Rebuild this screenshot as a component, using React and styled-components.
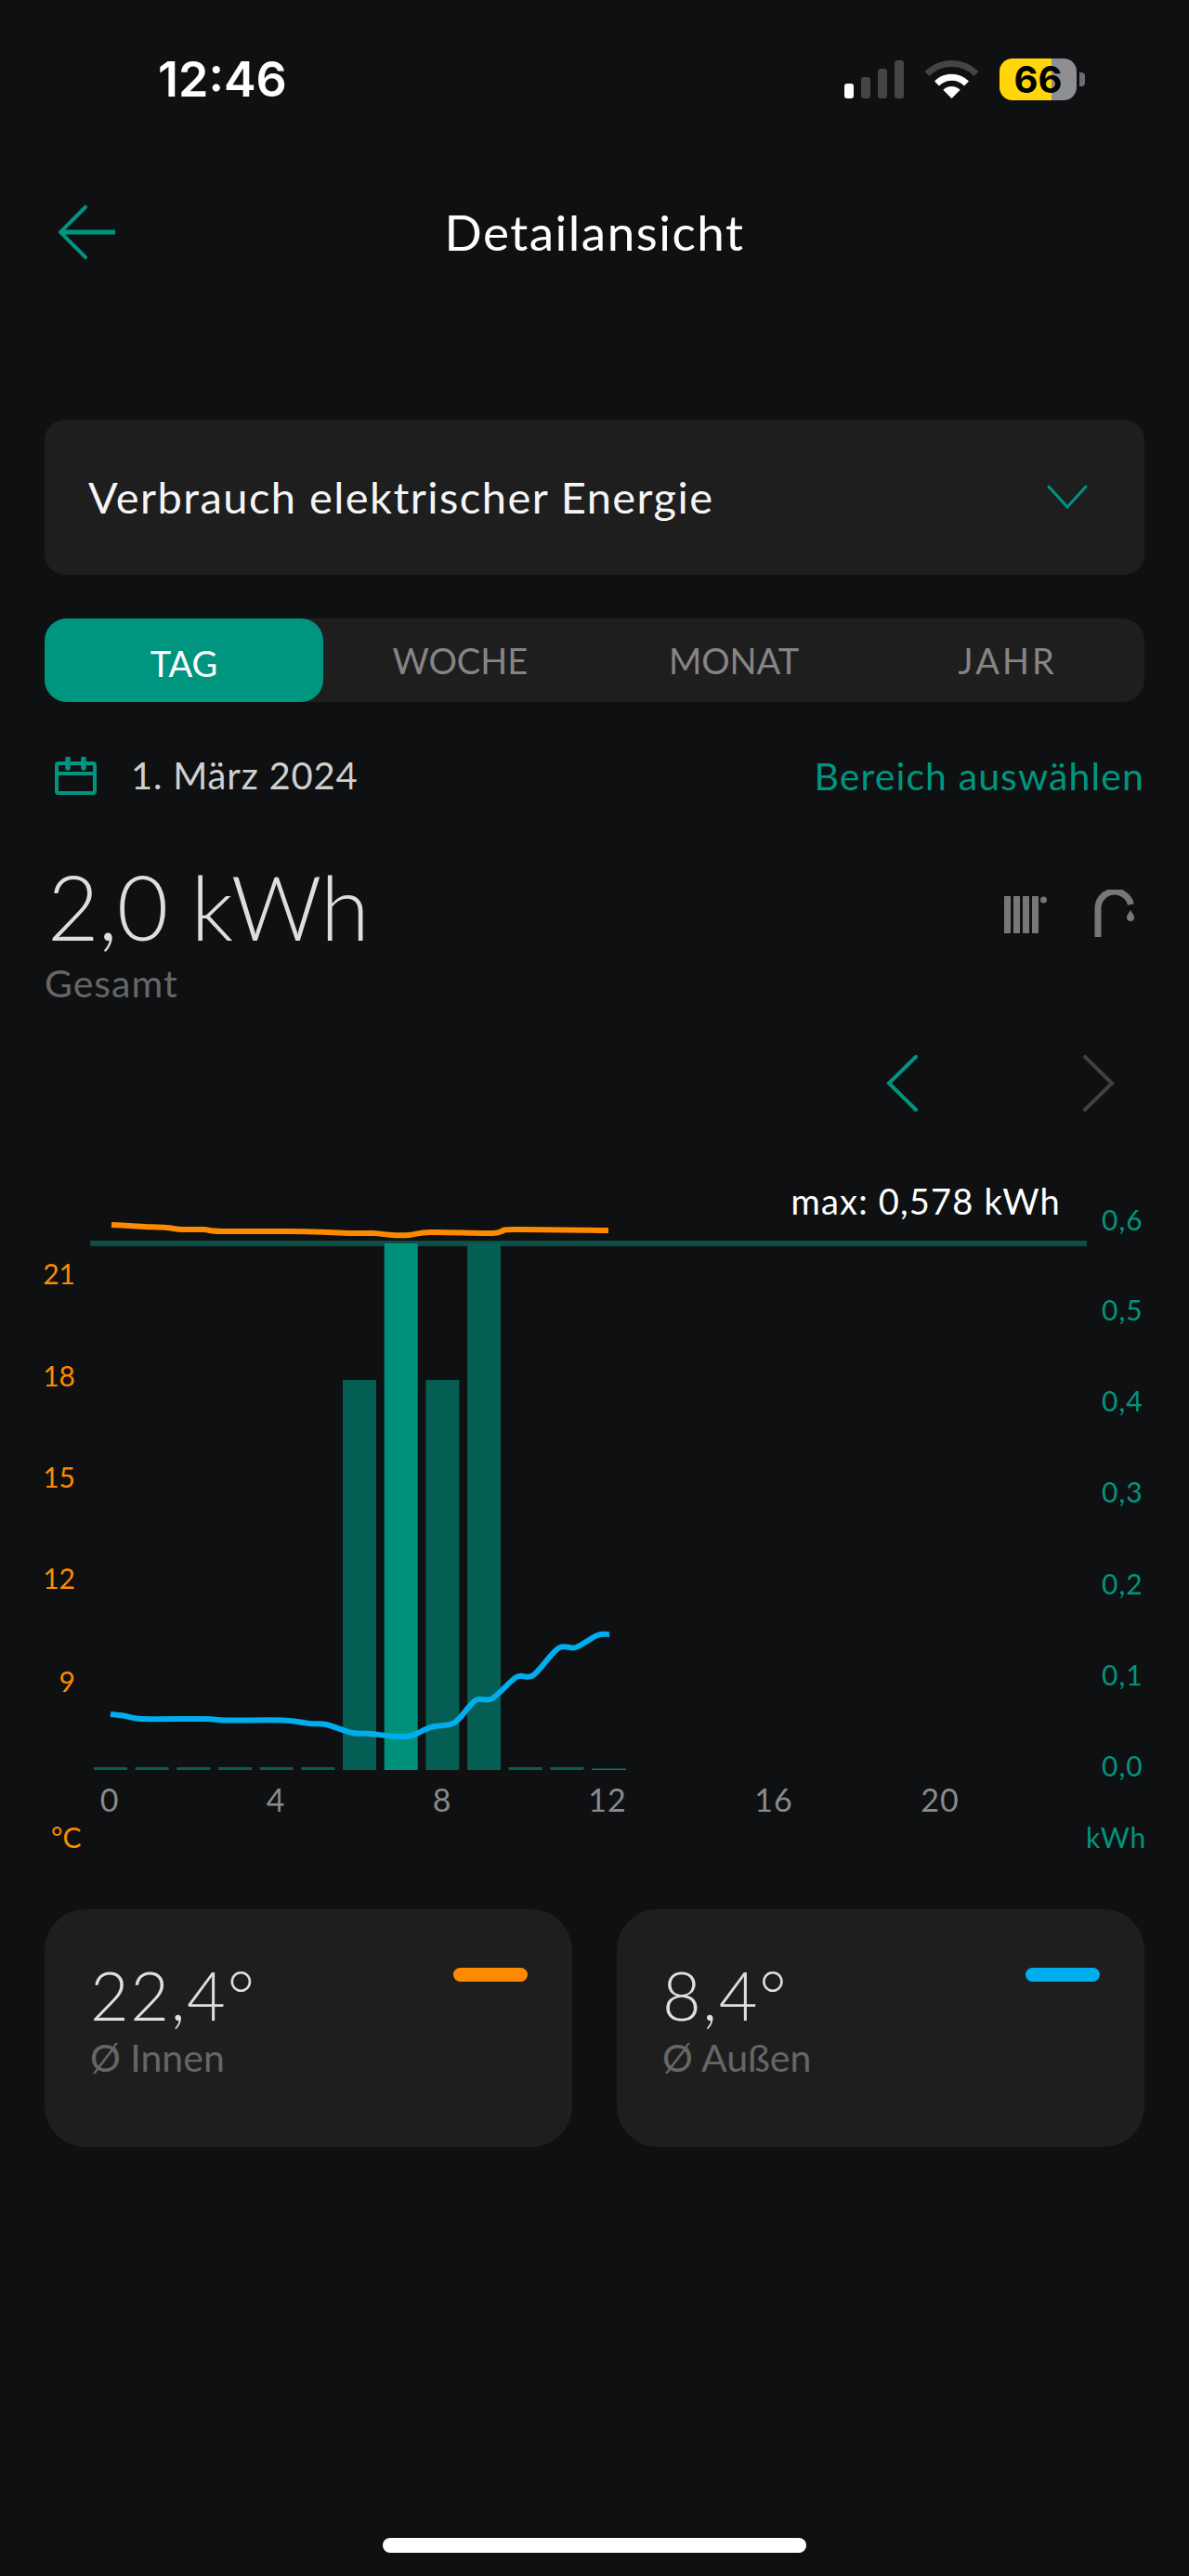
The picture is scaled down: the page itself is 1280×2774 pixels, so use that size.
import React from "react";
import styled, { createGlobalStyle } from "styled-components";

const GlobalStyle = createGlobalStyle`
  html, body { margin: 0; padding: 0; background: #0e1012; }
  body { font-family: "Lato", "Open Sans", sans-serif; }
`;

const TEAL = "#00957f";
const ORANGE = "#ff8a00";
const BLUE = "#00aeef";

const Page = styled.div`
  box-sizing: border-box;
  width: 1280px;
  height: 2774px;
  padding: 0 48px;
  background: #0e1012;
  display: flex;
  flex-direction: column;
  overflow: hidden;
`;

const StatusBar = styled.div`
  height: 150px;
  padding: 20px 64px 0 122px;
  box-sizing: border-box;
  display: flex;
  align-items: center;
  justify-content: space-between;
`;
const Time = styled.div`
  font-family: "Inter", sans-serif;
  font-weight: 600;
  font-size: 52px;
  color: #fff;
`;
const StatusIcons = styled.div`
  display: flex;
  align-items: center;
  gap: 23px;
`;
const Signal = styled.div`
  display: flex;
  align-items: flex-end;
  gap: 8px;
  height: 41px;
`;
const SignalBar = styled.div`
  width: 10px;
  height: ${(p) => p.$h}px;
  border-radius: 3px;
  background: ${(p) => (p.$on ? "#fff" : "#454545")};
`;
const BatteryWrap = styled.div`
  display: flex;
  align-items: center;
  gap: 3px;
`;
const Battery = styled.div`
  width: 83px;
  height: 45px;
  border-radius: 14px;
  background: linear-gradient(90deg, #ffd60a 0 67.5%, #8e8e93 67.5% 100%);
  display: flex;
  align-items: center;
  justify-content: center;
  font-family: "Inter", sans-serif;
  font-weight: 700;
  font-size: 40px;
  color: #000;
`;
const BatteryCap = styled.div`
  width: 6px;
  height: 15px;
  border-radius: 0 4px 4px 0;
  background: #6d6d70;
`;

const NavBar = styled.div`
  height: 200px;
  display: grid;
  grid-template-columns: 1fr auto 1fr;
  align-items: center;
`;
const BackIcon = styled.svg`
  width: 62px;
  height: 58px;
  margin-left: 15px;
  display: block;
`;
const Title = styled.div`
  font-size: 53px;
  color: #fff;
  letter-spacing: 1.5px;
  padding-bottom: 2px;
`;

const Select = styled.div`
  margin-top: 102px;
  height: 167px;
  border-radius: 22px;
  background: #1e1e1f;
  display: flex;
  align-items: center;
  justify-content: space-between;
  padding: 0 61px 2px 47px;
  box-sizing: border-box;
  font-size: 47px;
  letter-spacing: 1.45px;
  color: #f5f5f5;
`;

const Tabs = styled.div`
  margin-top: 47px;
  height: 90px;
  border-radius: 24px;
  background: #1e1e1f;
  display: grid;
  grid-template-columns: 300px repeat(3, 1fr);
`;
const Tab = styled.div`
  display: flex;
  align-items: center;
  justify-content: center;
  border-radius: 24px;
  font-size: 38px;
  letter-spacing: ${(p) => p.$ls ?? 0}px;
  padding-top: ${(p) => (p.$active ? 6 : 0)}px;
  background: ${(p) => (p.$active ? TEAL : "transparent")};
  color: ${(p) => (p.$active ? "#fff" : "#858585")};
`;

const DateRow = styled.div`
  margin-top: 49px;
  height: 60px;
  display: flex;
  align-items: center;
  justify-content: space-between;
`;
const DateLeft = styled.div`
  display: flex;
  align-items: center;
  gap: 37px;
  padding-left: 11px;
  font-size: 40px;
  letter-spacing: 0.8px;
  color: #cfcfcf;
`;
const RangeLink = styled.div`
  font-size: 41px;
  letter-spacing: 1.1px;
  color: ${TEAL};
`;

const TotalRow = styled.div`
  margin-top: 56px;
  display: flex;
  justify-content: space-between;
  align-items: flex-start;
`;
const TotalValue = styled.div`
  font-weight: 300;
  font-size: 96px;
  line-height: 110px;
  letter-spacing: -1px;
  color: #dedede;
  padding-left: 3px;
`;
const MutedLabel = styled.div`
  font-size: 41px;
  line-height: ${(p) => p.$lh}px;
  letter-spacing: ${(p) => p.$ls}px;
  margin-top: ${(p) => p.$mt || 0}px;
  color: #666;
`;
const TotalIcons = styled.div`
  display: flex;
  gap: 51px;
  margin-top: 37px;
  padding-right: 10px;
`;
const RadiatorIcon = styled.svg`
  margin-top: 7px;
`;

const Pager = styled.div`
  margin-top: 52px;
  height: 61px;
  display: flex;
  justify-content: flex-end;
  gap: 178px;
  padding-right: 32px;
`;

const ChartWrap = styled.div`
  margin: 43px -48px 0;
  height: 760px;
`;
const ChartSvg = styled.svg`
  display: block;
  width: 1280px;
  height: 760px;
  font-family: "Lato", sans-serif;
`;

const Cards = styled.div`
  margin-top: 56px;
  display: grid;
  grid-template-columns: 1fr 1fr;
  gap: 48px;
`;
const Card = styled.div`
  box-sizing: border-box;
  height: 256px;
  border-radius: 44px;
  background: #1e1e1f;
  padding: 52px 48px 0 49px;
  display: flex;
  justify-content: space-between;
  align-items: flex-start;
`;
const CardValue = styled.div`
  font-weight: 300;
  font-size: 72px;
  line-height: 80px;
  letter-spacing: 1.6px;
  color: #dedede;
`;
const Pill = styled.div`
  width: 80px;
  height: 15px;
  margin-top: 11px;
  border-radius: 8px;
  background: ${(p) => p.$color};
`;

const HomeIndicator = styled.div`
  margin: 421px auto 0;
  width: 456px;
  height: 16px;
  border-radius: 8px;
  background: #fff;
`;

/* Catmull-Rom smoothing for the temperature curves */
const smooth = (pts) => {
  let d = `M${pts[0][0]} ${pts[0][1]}`;
  for (let i = 0; i < pts.length - 1; i++) {
    const p0 = pts[i - 1] || pts[i];
    const p1 = pts[i];
    const p2 = pts[i + 1];
    const p3 = pts[i + 2] || p2;
    const c1x = p1[0] + (p2[0] - p0[0]) / 6;
    const c1y = p1[1] + (p2[1] - p0[1]) / 6;
    const c2x = p2[0] - (p3[0] - p1[0]) / 6;
    const c2y = p2[1] - (p3[1] - p1[1]) / 6;
    d += ` C${c1x} ${c1y} ${c2x} ${c2y} ${p2[0]} ${p2[1]}`;
  }
  return d;
};

const orangePts = [[120,1319],[140,1320],[156,1321],[179,1322],[196,1324],[219,1324],[239,1326],[312,1326],[353,1327],[375,1328],[402,1328],[422,1330],[440,1330],[464,1327],[527,1328],[540,1326],[554,1324],[655,1325]];
const bluePts = [[119,1846],[133,1847.5],[154,1851],[220,1851],[243,1852.5],[305,1852.5],[333,1856],[351,1857],[379,1866],[399,1867],[427,1870],[443,1869],[464,1860],[484,1857],[494,1851],[512,1831],[530,1829],[556,1806],[574,1804],[601,1775],[620,1774],[643,1761],[656,1760]];

const slotX = (i) => 101 + i * 44.67;
const dashes = [0, 1, 2, 3, 4, 5, 10, 11];
const bars = [
  { i: 6, top: 1486, fill: "#045e53" },
  { i: 7, top: 1339, fill: "#00917c" },
  { i: 8, top: 1486, fill: "#045e53" },
  { i: 9, top: 1339, fill: "#045e53" },
];
const tempTicks = [["21", 1373], ["18", 1483], ["15", 1592], ["12", 1701], ["9", 1812]];
const kwhTicks = [["0,6", 1315], ["0,5", 1412], ["0,4", 1510], ["0,3", 1608], ["0,2", 1707], ["0,1", 1805], ["0,0", 1903]];
const hourTicks = [["0", 118], ["4", 297], ["8", 476], ["12", 654], ["16", 833], ["20", 1012]];

const Chart = () => (
  <ChartSvg viewBox="0 1240 1280 760">
    {dashes.map((i) => (
      <rect key={i} x={slotX(i)} y={1903} width={36} height={3} fill="#0b5c50" />
    ))}
    <rect x={637} y={1904.5} width={37} height={1.5} fill="#0b7565" />
    <rect x={97} y={1336} width={1073} height={6} fill="#0b4f46" />
    {bars.map((b) => (
      <rect key={b.i} x={slotX(b.i)} y={b.top} width={36} height={1906 - b.top} fill={b.fill} />
    ))}
    <path d={smooth(orangePts)} fill="none" stroke={ORANGE} strokeWidth="6" />
    <path d={smooth(bluePts)} fill="none" stroke={BLUE} strokeWidth="6" />
    <text x={1142} y={1308} textAnchor="end" fontSize="38" letterSpacing="1.2" fill="#fff">max: 0,578 kWh</text>
    {tempTicks.map(([t, y]) => (
      <text key={t} x={81} y={y + 10} textAnchor="end" fontSize="30" fill={ORANGE}>{t}</text>
    ))}
    <text x={55} y={1990} fontSize="30" fill={ORANGE}>°C</text>
    {kwhTicks.map(([t, y]) => (
      <text key={t} x={1186} y={y + 10} fontSize="30" letterSpacing="1" fill={TEAL}>{t}</text>
    ))}
    <text x={1169} y={1990} fontSize="30" letterSpacing="1" fill={TEAL}>kWh</text>
    {hourTicks.map(([t, x]) => (
      <text key={t} x={x} y={1951} textAnchor="middle" fontSize="34" letterSpacing="1" fill="#8a8a8a">{t}</text>
    ))}
  </ChartSvg>
);

export default function App() {
  return (
    <Page>
      <GlobalStyle />
      <StatusBar>
        <Time>12:46</Time>
        <StatusIcons>
          <Signal>
            <SignalBar $h={16} $on />
            <SignalBar $h={23} />
            <SignalBar $h={32} />
            <SignalBar $h={41} />
          </Signal>
          <svg width="57" height="41" viewBox="0 0 57 41">
            <path d="M2 14.5A37.5 37.5 0 0 1 55 14.5" fill="none" stroke="#454545" strokeWidth="7" />
            <path d="M12.5 25A22.5 22.5 0 0 1 44.5 25" fill="none" stroke="#fff" strokeWidth="7" />
            <path d="M28.5 41L19.3 31.8A13 13 0 0 1 37.7 31.8Z" fill="#fff" />
          </svg>
          <BatteryWrap>
            <Battery>66</Battery>
            <BatteryCap />
          </BatteryWrap>
        </StatusIcons>
      </StatusBar>

      <NavBar>
        <BackIcon viewBox="0 0 62 58" fill="none" stroke={TEAL} strokeLinecap="round">
          <path d="M29 2L2 29L29 56" strokeWidth="4" />
          <path d="M2 29H61" strokeLinecap="butt" strokeWidth="5" />
        </BackIcon>
        <Title>Detailansicht</Title>
        <div />
      </NavBar>

      <Select>
        <span>Verbrauch elektrischer Energie</span>
        <svg width="44" height="26" viewBox="0 0 44 26" fill="none" stroke={TEAL} strokeWidth="3" strokeLinecap="round">
          <path d="M2 2L22 24L42 2" />
        </svg>
      </Select>

      <Tabs>
        <Tab $active>TAG</Tab>
        <Tab>WOCHE</Tab>
        <Tab>MONAT</Tab>
        <Tab $ls={3}>JAHR</Tab>
      </Tabs>

      <DateRow>
        <DateLeft>
          <svg width="45" height="41" viewBox="0 0 45 41" fill="none" stroke={TEAL}>
            <rect x="2" y="7" width="41" height="32" rx="2" strokeWidth="4" />
            <path d="M2 18H43" strokeWidth="4" />
            <path d="M14 2V12M31 2V12" strokeWidth="5.5" strokeLinecap="round" />
          </svg>
          <span>1. März 2024</span>
        </DateLeft>
        <RangeLink>Bereich auswählen</RangeLink>
      </DateRow>

      <TotalRow>
        <div>
          <TotalValue>2,0 kWh</TotalValue>
          <MutedLabel $lh={50} $ls={1} $mt={3}>Gesamt</MutedLabel>
        </div>
        <TotalIcons>
          <RadiatorIcon width="46" height="40" viewBox="0 0 46 40" fill="#777">
            <rect x="0" y="0" width="7" height="40" />
            <rect x="10" y="0" width="7" height="40" />
            <rect x="20" y="0" width="7" height="40" />
            <rect x="30" y="0" width="7" height="40" />
            <circle cx="42.5" cy="4" r="3.5" />
          </RadiatorIcon>
          <svg width="44" height="51" viewBox="0 0 44 51">
            <path d="M4 51V21A18 18 0 0 1 39.5 16" fill="none" stroke="#777" strokeWidth="7" />
            <path d="M39 22C41 26 43 27 43 30A4 4 0 0 1 35 30C35 27 37 26 39 22Z" fill="#777" />
          </svg>
        </TotalIcons>
      </TotalRow>

      <Pager>
        <svg width="34" height="61" viewBox="0 0 34 61" fill="none" stroke={TEAL} strokeWidth="4" strokeLinecap="round">
          <path d="M32 2L3 30.5L32 59" />
        </svg>
        <svg width="34" height="61" viewBox="0 0 34 61" fill="none" stroke="#404040" strokeWidth="4" strokeLinecap="round">
          <path d="M2 2L31 30.5L2 59" />
        </svg>
      </Pager>

      <ChartWrap>
        <Chart />
      </ChartWrap>

      <Cards>
        <Card>
          <div>
            <CardValue>22,4°</CardValue>
            <MutedLabel $lh={44} $ls={0} $mt={6}>Ø Innen</MutedLabel>
          </div>
          <Pill $color={ORANGE} />
        </Card>
        <Card>
          <div>
            <CardValue>8,4°</CardValue>
            <MutedLabel $lh={44} $ls={0} $mt={6}>Ø Außen</MutedLabel>
          </div>
          <Pill $color={BLUE} />
        </Card>
      </Cards>

      <HomeIndicator />
    </Page>
  );
}
